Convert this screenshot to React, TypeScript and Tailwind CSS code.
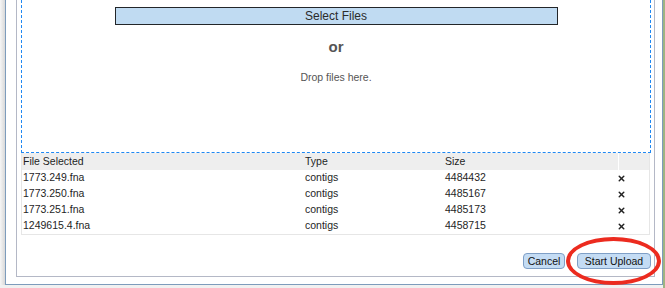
import { X } from "lucide-react";

const files = [
  { name: "1773.249.fna", type: "contigs", size: "4484432" },
  { name: "1773.250.fna", type: "contigs", size: "4485167" },
  { name: "1773.251.fna", type: "contigs", size: "4485173" },
  { name: "1249615.4.fna", type: "contigs", size: "4458715" },
];

const cols = "grid grid-cols-[281px_140px_175px_31px]";

export default function App() {
  return (
    <div className="relative w-[665px] h-[288px] overflow-hidden bg-[#f1f1f1] flex font-[Liberation_Sans,Arial,sans-serif]">
      {/* window shadow */}
      <div className="w-[5px] h-[285px] bg-gradient-to-r from-[#f6f6f6] to-[#d9d9d9]" />

      {/* dialog window */}
      <div className="w-[658px] h-[285px] bg-white border-x border-b border-[#7d9cbc] pl-[10px] pr-[7px] pb-[7px]">
        <div className="h-full border-x border-b border-[#b4b8c6] pl-[4px] pr-[3px] flex flex-col">
          {/* drop zone */}
          <div className="h-[153px] border-x border-b border-dashed border-[#1f88f2] flex flex-col items-center">
            <button className="mt-[7px] w-[443px] h-[18px] bg-[#c0dbf2] border border-[#232629] text-[12px] leading-none text-[#2b2b2b]">
              Select Files
            </button>
            <div className="mt-[13px] text-[15px] leading-[18px] font-bold text-[#555]">or</div>
            <div className="mt-[14px] text-[10.5px] leading-[14px] text-[#555]">Drop files here.</div>
          </div>

          {/* file table */}
          <div className="w-[629px] border-x border-b border-[#e6e6e6] text-[10.5px] text-[#1e1e1e]">
            <div className={`${cols} h-[17px] bg-[#eeeeee] items-center`}>
              <div className="pl-[1px]">File Selected</div>
              <div className="pl-[2px]">Type</div>
              <div className="pl-[2px]">Size</div>
              <div className="h-full border-l border-white" />
            </div>
            {files.map((f) => (
              <div key={f.name} className={`${cols} h-[16px] items-center`}>
                <div className="pl-[1px]">{f.name}</div>
                <div className="pl-[2px]">{f.type}</div>
                <div className="pl-[2px]">{f.size}</div>
                <div className="flex items-center -ml-[1px]">
                  <X size={9} strokeWidth={4} className="text-[#222]" />
                </div>
              </div>
            ))}
          </div>

          {/* actions */}
          <div className="mt-[18px] flex justify-end gap-[12px]">
            <button className="w-[42px] h-[16px] rounded-[4px] bg-[#c4dcf4] border border-[#7f9fc6] text-[10.5px] leading-none text-[#111]">
              Cancel
            </button>
            <button className="w-[74px] h-[16px] rounded-[4px] bg-[#c4dcf4] border border-[#7f9fc6] text-[10.5px] leading-none text-[#111]">
              Start Upload
            </button>
          </div>
        </div>
      </div>

      {/* right edge of desktop */}
      <div className="w-[2px] h-full bg-[#9fb482]" />

      {/* red annotation circle */}
      <div className="absolute left-[566px] top-[237px] w-[95px] h-[48px] rounded-[50%] border-[4px] border-[#ec2b1f]" />
    </div>
  );
}
